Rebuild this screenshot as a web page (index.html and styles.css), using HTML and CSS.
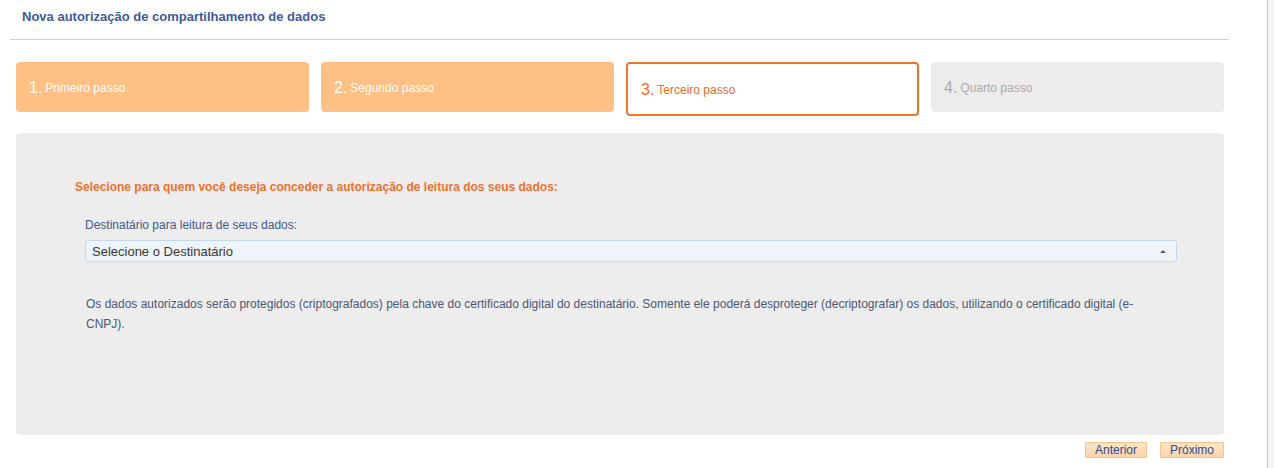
FILE: index.html
```html
<!DOCTYPE html>
<html lang="pt-BR">

<head>
    <meta charset="UTF-8">
    <meta name="viewport" content="width=device-width, initial-scale=1.0">
    <title>Nova autorização de compartilhamento de dados</title>
    <link rel="stylesheet" href="styles.css">
</head>

<body>
    <div class="page">
        <div class="header">
            <h1 class="title">Nova autorização de compartilhamento de dados</h1>
        </div>

        <div class="wizard">
            <div class="steps">
                <div class="step done"><span class="num">1.</span> Primeiro passo</div>
                <div class="step done"><span class="num">2.</span> Segundo passo</div>
                <div class="step current"><span class="num">3.</span> Terceiro passo</div>
                <div class="step todo"><span class="num">4.</span> Quarto passo</div>
            </div>

            <div class="panel">
                <p class="question">Selecione para quem você deseja conceder a autorização de leitura dos seus dados:</p>

                <div class="field">
                    <label class="label" for="dest">Destinatário para leitura de seus dados:</label>
                    <div class="select" id="dest">
                        <span>Selecione o Destinatário</span>
                        <span class="arrow"></span>
                    </div>
                </div>

                <p class="note">Os dados autorizados serão protegidos (criptografados) pela chave do certificado digital do destinatário. Somente ele poderá desproteger (decriptografar) os dados, utilizando o certificado digital (e-CNPJ).</p>
            </div>

            <div class="actions">
                <button class="btn">Anterior</button>
                <button class="btn">Próximo</button>
            </div>
        </div>
    </div>
</body>

</html>
```

FILE: styles.css
```css
* {
    margin: 0;
    padding: 0;
    box-sizing: border-box;
}

body,
html {
    height: 100%;
    font-family: "Liberation Sans", Arial, sans-serif;
    background: #f7f5f1;
    overflow: hidden;
}

.page {
    width: 1268px;
    height: 100%;
    background: #fff;
    border-right: 1px solid #f9bf86;
}

.header {
    margin: 0 38px 0 10px;
    padding: 9px 0 0 12px;
    height: 40px;
    border-bottom: 1px solid #f9c798;
}

.title {
    font-size: 13px;
    font-weight: bold;
    color: #3d5c99;
}

.wizard {
    width: 1208px;
    margin-left: 16px;
}

.steps {
    display: grid;
    grid-template-columns: repeat(4, 293px);
    gap: 12px;
    align-items: start;
    margin-top: 22px;
}

.step {
    height: 50px;
    border-radius: 4px;
    padding: 1px 13px 0;
    display: flex;
    align-items: center;
    gap: 3px;
    font-size: 12px;
}

.step .num {
    font-size: 16px;
}

.done {
    background: #fec084;
    color: #fff;
}

.current {
    height: 54px;
    background: #fff;
    border: 2px solid #ee7428;
    color: #ee6a1c;
    padding-top: 2px;
}

.todo {
    background: #ececec;
    color: #a9a9a9;
}

.panel {
    margin-top: 17px;
    height: 302px;
    background: #ededed;
    border-radius: 4px;
    padding: 47px 47px 0 59px;
}

.question {
    font-size: 12px;
    font-weight: bold;
    color: #f0702c;
}

.field {
    margin: 24px 0 0 10px;
}

.label {
    display: block;
    font-size: 12px;
    color: #3f5a8c;
    margin-bottom: 8px;
}

.select {
    height: 22px;
    background: #eff4f9;
    border: 1px solid #c3d8ec;
    border-radius: 3px;
    padding: 0 6px;
    display: flex;
    align-items: center;
    justify-content: space-between;
    font-size: 13px;
    color: #383838;
}

.arrow {
    width: 0;
    height: 0;
    border-left: 3px solid transparent;
    border-right: 3px solid transparent;
    border-bottom: 3px solid #555a66;
    margin-right: 4px;
}

.note {
    margin: 32px 0 0 11px;
    width: 1070px;
    font-size: 12px;
    line-height: 20px;
    color: #4b5773;
}

.actions {
    display: flex;
    justify-content: flex-end;
    gap: 13px;
    margin-top: 7px;
}

.btn {
    height: 16px;
    padding: 0 9px;
    font-family: "Liberation Sans", Arial, sans-serif;
    font-size: 12px;
    color: #2f4a8a;
    background: linear-gradient(#fde6cc, #fcd3aa);
    border: 1px solid #f8c58f;
    line-height: 14px;
}
```
